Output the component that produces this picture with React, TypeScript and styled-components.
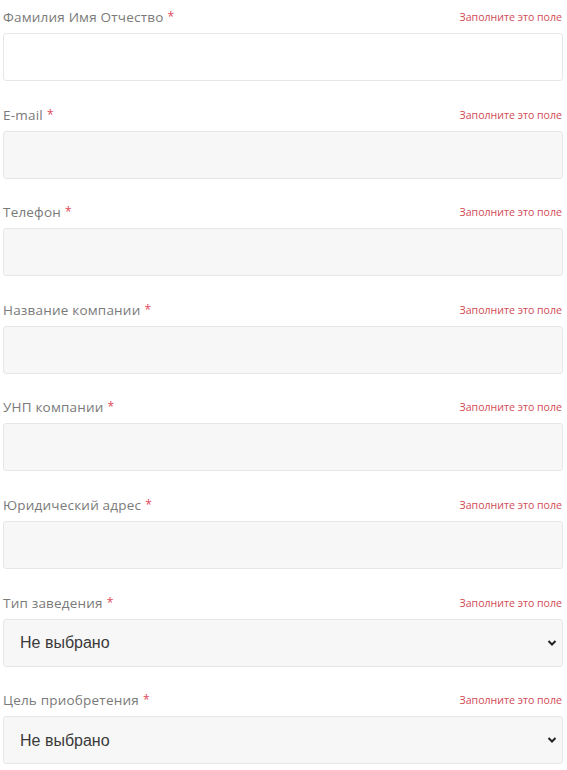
import styled, { createGlobalStyle } from "styled-components";

const GlobalStyle = createGlobalStyle`
  body {
    margin: 0;
    background: #ffffff;
    font-family: "Open Sans", "Liberation Sans", sans-serif;
  }
`;

const Form = styled.form`
  width: 560px;
  padding: 4px 4px 0 3px;
`;

const Field = styled.div`
  display: flex;
  flex-direction: column;
  gap: 3px;
  margin-bottom: 20.6px;
`;

const LabelRow = styled.div`
  display: flex;
  justify-content: space-between;
  align-items: center;
  height: 26px;
`;

const Label = styled.label`
  font-size: 13.5px;
  color: #7a7a7a;
  letter-spacing: 0.2px;
`;

const Star = styled.span`
  color: #e0475a;
  margin-left: 4px;
  font-size: 12px;
  vertical-align: 1px;
`;

const Error = styled.span`
  font-size: 10.6px;
  color: #d24a55;
  margin-right: 1px;
`;

const Input = styled.input<{ $white?: boolean }>`
  box-sizing: border-box;
  width: 100%;
  height: 48px;
  border: 1px solid #e6e6e6;
  border-radius: 3px;
  background: ${(p) => (p.$white ? "#ffffff" : "#f7f7f7")};
  padding: 0 16px;
  font-size: 16px;
  outline: none;
`;

const SelectWrap = styled.div`
  position: relative;
`;

const Select = styled.select`
  box-sizing: border-box;
  width: 100%;
  height: 48px;
  border: 1px solid #e6e6e6;
  border-radius: 3px;
  background: #f7f7f7;
  padding: 0 16px;
  font-family: "Liberation Sans", Arial, sans-serif;
  font-size: 16px;
  color: #3a3a3a;
  appearance: none;
  outline: none;
`;

const Chevron = styled.svg`
  position: absolute;
  right: 6px;
  top: 20px;
  width: 10px;
  height: 8px;
  pointer-events: none;
`;

type FieldDef = { label: string; select?: boolean; white?: boolean };

const fields: FieldDef[] = [
  { label: "Фамилия Имя Отчество", white: true },
  { label: "E-mail" },
  { label: "Телефон" },
  { label: "Название компании" },
  { label: "УНП компании" },
  { label: "Юридический адрес" },
  { label: "Тип заведения", select: true },
  { label: "Цель приобретения", select: true },
];

export default function App() {
  return (
    <>
      <GlobalStyle />
      <Form>
        {fields.map((f) => (
          <Field key={f.label}>
            <LabelRow>
              <Label>
                {f.label}
                <Star>*</Star>
              </Label>
              <Error>Заполните это поле</Error>
            </LabelRow>
            {f.select ? (
              <SelectWrap>
                <Select defaultValue="">
                  <option value="">Не выбрано</option>
                </Select>
                <Chevron viewBox="0 0 10 8">
                  <path
                    d="M1.5 2 L5 5.5 L8.5 2"
                    fill="none"
                    stroke="#222"
                    strokeWidth="2"
                  />
                </Chevron>
              </SelectWrap>
            ) : (
              <Input $white={f.white} />
            )}
          </Field>
        ))}
      </Form>
    </>
  );
}
